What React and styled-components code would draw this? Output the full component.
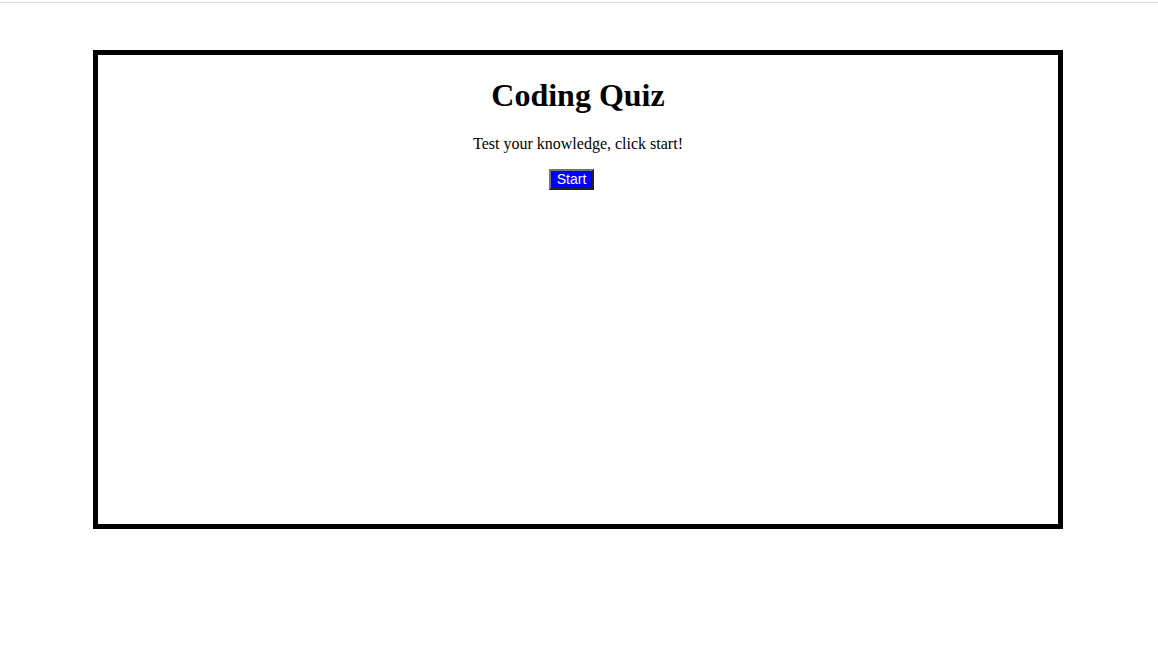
import styled, { createGlobalStyle } from 'styled-components';

const GlobalStyle = createGlobalStyle`
  body {
    margin: 0;
    background: #fff;
    font-family: "Liberation Serif", "Times New Roman", serif;
    color: #000;
  }
`;

function App() {
  return (
    <>
      <GlobalStyle />
      <TopBar />
      <QuizBox>
        <Title>Coding Quiz</Title>
        <Intro>Test your knowledge, click start!</Intro>
        <StartBtn>Start</StartBtn>
      </QuizBox>
    </>
  );
}

export default App;

const TopBar = styled.header`
  height: 2px;
  border-bottom: 1px solid #dcdcdc;
`;

const QuizBox = styled.main`
  box-sizing: border-box;
  width: 970px;
  height: 479px;
  margin: 47px 0 0 93px;
  border: 5px solid #000;
  text-align: center;
`;

const Title = styled.h1`
  font-size: 32px;
  font-weight: bold;
  margin: 22px 0 21px;
`;

const Intro = styled.p`
  font-size: 16px;
  margin: 16px 0;
`;

const StartBtn = styled.button`
  font-family: "Liberation Sans", Arial, sans-serif;
  font-size: 14px;
  line-height: 15px;
  padding: 1px 6px;
  margin-right: 13px;
  background: #0000ff;
  color: #fff;
  border: 2px outset #767676;
  cursor: pointer;
`;
